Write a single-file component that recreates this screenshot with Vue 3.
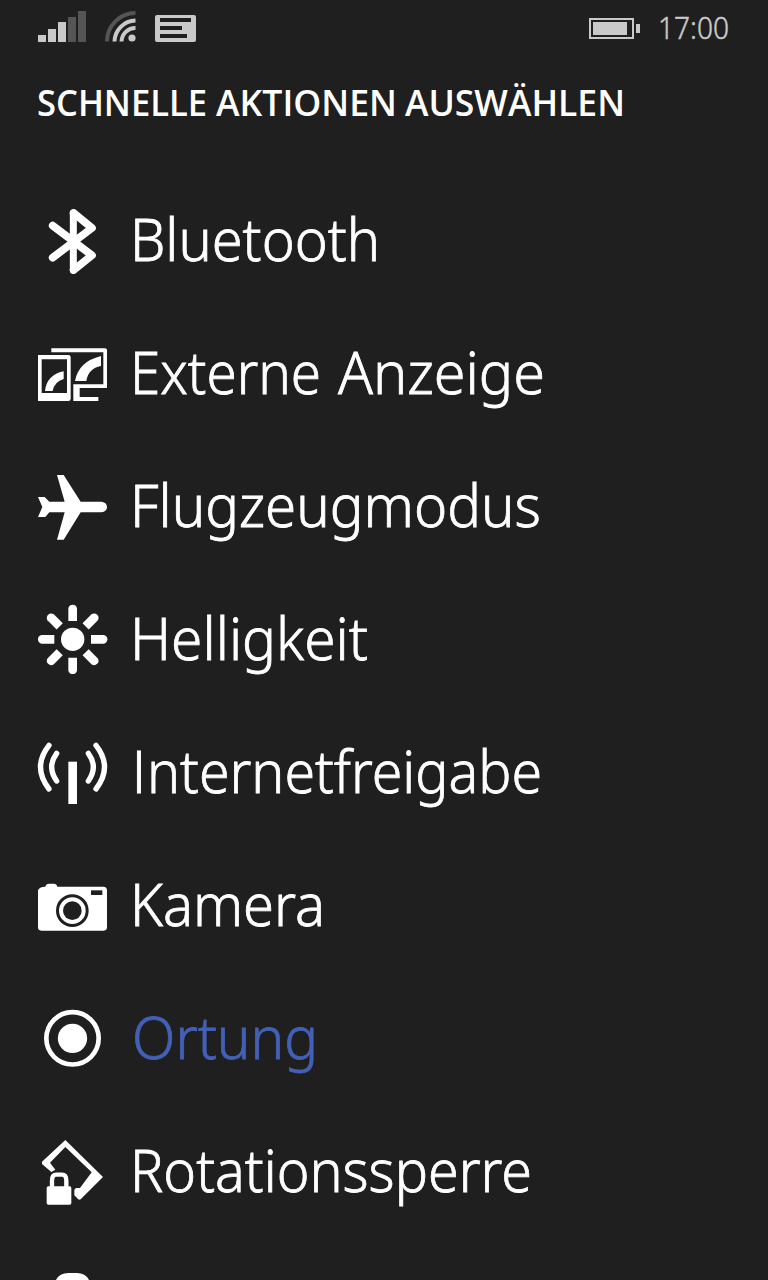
<template>
  <div class="screen">
    <header class="status">
      <svg class="status-left" viewBox="0 0 180 44">
        <g fill="#c9c9c9">
          <path d="M1 35h8v7h-8zM11 29h8v13h-8zM21 22h8v20h-8z"/>
          <path fill="#555" d="M31 17h8v25h-8zM41 11h8v31h-8z"/>
        </g>
        <g fill="none" stroke="#c9c9c9" stroke-width="4">
          <path stroke="#555" d="M70 41.500A28.500 28.500 0 0 1 98.500 13"/>
          <path d="M77.500 41.500A21.500 21.500 0 0 1 98.500 20.500"/>
          <path d="M84.500 41.500A14 14 0 0 1 98.500 28"/>
        </g>
        <circle cx="95" cy="38" r="3.600" fill="#c9c9c9"/>
        <rect x="118" y="15" width="41" height="27" rx="2" fill="#c9c9c9"/>
        <path fill="#1f1f1f" d="M123 18h31v4h-31zM123 26h22v4h-22zM123 34h27v4h-27z"/>
      </svg>
      <svg class="battery" viewBox="0 0 52 44">
        <path fill="none" stroke="#c9c9c9" stroke-width="2" d="M1 19h43v19h-43z"/>
        <path fill="#c9c9c9" d="M4 22h34v13h-34zM47 24h4v9h-4z"/>
      </svg>
      <svg class="clock" viewBox="0 0 80 50">
        <text x="1" y="39" textLength="71" lengthAdjust="spacingAndGlyphs">17:00</text>
      </svg>
    </header>
    <h1>
      <svg viewBox="0 0 700 60">
        <text
          v-for="word in title" :key="word.text"
          :x="word.x" y="46" :textLength="word.width" lengthAdjust="spacingAndGlyphs"
        >{{ word.text }}</text>
      </svg>
    </h1>
    <ul>
      <li v-for="item in actions" :key="item.box" :class="{ active: item.active }">
        <svg class="icon" :viewBox="item.box" v-html="item.icon"></svg>
        <svg class="label" viewBox="0 0 620 133">
          <text
            v-for="word in item.words" :key="word.text" :class="{ plain: word.plain }"
            :x="word.x" y="86" :textLength="word.width" lengthAdjust="spacingAndGlyphs"
          >{{ word.text }}</text>
        </svg>
      </li>
      <li>
        <svg class="icon" viewBox="51 447 216 216">
          <path d="M106 484Q116 459 145 459H170Q199 459 209 484V609H106z"/>
        </svg>
      </li>
    </ul>
  </div>
</template>

<script setup>
const dark = '#1f1f1f'

const title = [
  { text: 'SCHNELLE', x: 0, width: 170 },
  { text: 'AKTIONEN', x: 179, width: 181 },
  { text: 'AUSWÄHLEN', x: 368, width: 220 }
]

const actions = [
  {
    words: [{ text: 'Bluetooth', x: 2, width: 250 }], box: '51 45 216 216',
    icon: '<g fill="none" stroke="#fff" stroke-width="23" stroke-linecap="round" stroke-linejoin="round"><path d="M98 203L216 114L161 69M98 107L216 196L161 240"/><path stroke-width="21" d="M160 68V241"/></g>'
  },
  {
    words: [{ text: 'Externe', x: 2, width: 191 }, { text: 'Anzeige', x: 210, width: 207 }], box: '51 54 216 216',
    icon: '<path fill-rule="evenodd" d="M54 105H145Q152 105 152 112V236Q152 243 145 243H54zM65 118V219H141V118z"/><path d="M94 85H255Q261 85 261 91V204H179V231H235V243H160V193H250V97H94z"/><path d="M75 213Q80 165 131 154V177Q103 185 98 213zM165 183Q175 125 243 108V138Q205 145 199 183z"/>'
  },
  {
    words: [{ text: 'Flugzeugmodus', x: 2, width: 411 }], box: '51 63 216 216',
    icon: '<path d="M54 141H74L88 155H134L111 75H131L182 155H245Q261 158 261 171Q261 184 245 187H182L131 269H111L134 187H88L76 201H54L67 171z"/>'
  },
  {
    words: [{ text: 'Helligkeit', x: 2, width: 238 }], box: '51 57 216 216',
    icon: '<circle cx="158" cy="163" r="35"/>' + [0, 45, 90, 135, 180, 225, 270, 315].map(a =>
      `<path transform="rotate(${a} 158 163)" d="M145 108V69Q148 59 158 59T171 69V108z"/>`).join('')
  },
  {
    words: [{ text: 'I', x: 3, width: 16, plain: true }, { text: 'nternetfreigabe', x: 19, width: 395 }], box: '51 51 216 216',
    icon: '<path d="M145 125H171V252H145z"/><g fill="none" stroke="#fff" stroke-width="16" stroke-linecap="round"><path d="M87 76Q36 141 87 207M110 100Q80 141 110 183M228 76Q279 141 228 207M205 100Q235 141 205 183"/></g>'
  },
  {
    words: [{ text: 'Kamera', x: 2, width: 195 }], box: '51 30 216 216',
    icon: `<path d="M54 91Q57 81 76 80Q78 71 87 71H101Q110 71 112 80H250Q261 81 261 91V202Q261 212 251 212H64Q54 212 54 202z"/><g fill="${dark}"><circle cx="157" cy="152" r="49"/><circle cx="157" cy="152" r="40" fill="#fff"/><circle cx="157" cy="152" r="28"/><path d="M213 91H247V105H213z"/></g>`
  },
  {
    words: [{ text: 'Ortung', x: 4, width: 186 }], box: '51 54 216 216', active: true,
    icon: '<circle cx="157.500" cy="160" r="78.500" fill="none" stroke="#fff" stroke-width="14"/><circle cx="157.500" cy="160" r="44"/>'
  },
  {
    words: [{ text: 'Rotationssperre', x: 2, width: 402 }], box: '51 48 216 216',
    icon: '<path d="M136 60L249 171L182 238Q178 241 174 237L163 226V209L168 204H180L215 157L136 81L90 128L106 149L94 156L66 132V125z"/><path d="M85 199H149Q154 199 154 204V249Q154 254 149 254H85Q80 254 80 249V204Q80 199 85 199z"/><path fill="none" stroke="#fff" stroke-width="13" d="M96 202V182Q96 164 109 164H126Q139 164 139 182V202"/>'
  }
]
</script>

<style>
body {
  background: #1f1f1f;
  overflow: hidden;
}
</style>

<style scoped>
.screen {
  width: 768px;
  height: 1280px;
  overflow: hidden;
  background: #1f1f1f;
  font-family: "Noto Sans", "Open Sans", sans-serif;
}

svg {
  display: block;
  flex: none;
  overflow: visible;
  fill: #fff;
}

.status {
  display: flex;
  height: 50px;
  padding: 0 31px 0 37px;
}

.status-left {
  width: 180px;
  height: 44px;
}

.battery {
  width: 52px;
  height: 44px;
  margin-left: auto;
}

.clock {
  width: 80px;
  height: 50px;
  margin-left: 16px;
  fill: #c9c9c9;
  stroke: #c9c9c9;
  stroke-width: 0.5px;
  font-size: 32px;
  font-weight: 300;
}

h1 {
  height: 60px;
  margin: 20px 0 45px 37px;
  font-family: "Open Sans", "Noto Sans", sans-serif;
  font-size: 36px;
  font-weight: 600;
}

h1 svg {
  width: 700px;
  height: 60px;
}

ul {
  margin: 0;
  padding: 0 0 0 37px;
  list-style: none;
}

li {
  display: flex;
  height: 133px;
}

.icon {
  width: 72px;
  height: 72px;
  margin-top: 30px;
}

.label {
  width: 620px;
  height: 133px;
  margin-left: 19px;
  stroke: #fff;
  stroke-width: 0.8px;
  font-size: 59px;
  font-weight: 300;
}

/* capital I without serifs */
.plain {
  font-family: "Open Sans", sans-serif;
}

.active .label {
  fill: #4360b5;
  stroke: #4360b5;
}
</style>
